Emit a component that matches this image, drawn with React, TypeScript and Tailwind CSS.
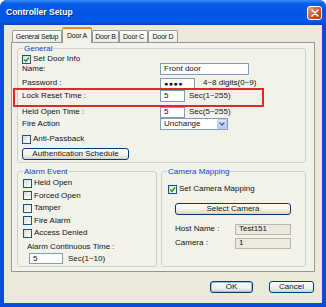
import type { ReactNode } from 'react'

const font = "font-['Liberation_Sans',Arial,sans-serif]"

export default function App() {
  return (
    <div className={`w-[326px] h-[307px] bg-[#0b4be0] flex flex-col rounded-t-[7px] overflow-hidden ${font} text-[8px] leading-none text-[#111]`}>
      <TitleBar />
      <div className="relative flex-1 mx-[4px] mb-[4px] bg-[#ece9d8] flex flex-col pt-[2px]">
        <div className="relative z-10 flex items-end h-[16px] pl-[8px]">
          <Tab label="General Setup" className="w-[50px]" />
          <Tab label="Door A" className="w-[30px]" active />
          <Tab label="Door B" className="w-[27px]" />
          <Tab label="Door C" className="w-[29px]" />
          <Tab label="Door D" className="w-[30px]" />
        </div>
        <div className="-mt-[1px] ml-[7px] w-[304px] h-[230px] border border-[#919b9c] bg-[#f3f2ea] px-[5px] pt-[5px]">
          <GeneralGroup />
          <div className="flex gap-[4px] mt-[8px]">
            <AlarmGroup />
            <CameraGroup />
          </div>
        </div>
        <div className="flex justify-end gap-[16px] pr-[8px] mt-[9px]">
          <XpButton className="w-[43px]" primary>OK</XpButton>
          <XpButton className="w-[45px]">Cancel</XpButton>
        </div>
        {/* highlight drawn over the dialog */}
        <div className="absolute left-[9px] top-[63px] w-[251px] h-[19px] border-2 border-[#e0262b]" />
      </div>
    </div>
  )
}

function TitleBar() {
  return (
    <div className="h-[25px] flex items-center pl-[6px] pr-[4px] bg-[linear-gradient(to_bottom,#3d8ff6_0%,#0a5ee9_14%,#0055e5_50%,#0559ea_85%,#0043cc_100%)]">
      <span className="text-white font-bold text-[8.5px] [text-shadow:1px_1px_0_#0a2a8a]">Controller Setup</span>
      <div className="ml-auto w-[15px] h-[14px] rounded-[3px] border border-white bg-[linear-gradient(135deg,#f0a080,#d8562e_50%,#b83510)] flex items-center justify-center">
        <svg width="8" height="8" viewBox="0 0 8 8">
          <path d="M1 1 L7 7 M7 1 L1 7" stroke="white" strokeWidth="1.6" strokeLinecap="round" />
        </svg>
      </div>
    </div>
  )
}

function Tab({ label, className, active }: { label: string; className: string; active?: boolean }) {
  if (active) {
    return (
      <div className={`${className} h-[16px] flex items-center justify-center bg-[#f3f2ea] border-x border-[#919b9c] border-t-[2px] border-t-[#e68b2c] rounded-t-[2px] text-[7px] tracking-[-0.2px] pb-[1px]`}>
        {label}
      </div>
    )
  }
  return (
    <div className={`${className} h-[12px] mb-[1px] flex items-center justify-center border border-b-0 border-[#919b9c] rounded-t-[2px] bg-[linear-gradient(to_bottom,#ffffff,#ecebe5)] text-[7px] tracking-[-0.2px]`}>
      {label}
    </div>
  )
}

function Group({ title, className, children }: { title: string; className: string; children: ReactNode }) {
  return (
    <div className={`relative border border-[#d0d0bf] rounded-[3px] ${className}`}>
      <span className="absolute -top-[4px] left-[5px] px-[1px] bg-[#f3f2ea] text-[#0046d5]">{title}</span>
      {children}
    </div>
  )
}

function Check({ checked }: { checked?: boolean }) {
  return (
    <span className="w-[9px] h-[9px] shrink-0 border border-[#1c5180] bg-[linear-gradient(135deg,#dcdcd7,#ffffff)] flex items-center justify-center">
      {checked && (
        <svg width="7" height="7" viewBox="0 0 7 7">
          <path d="M1 3.5 L2.8 5.3 L6 1.5" stroke="#21a121" strokeWidth="1.5" fill="none" />
        </svg>
      )}
    </span>
  )
}

function Field({ className, children, disabled }: { className: string; children?: ReactNode; disabled?: boolean }) {
  return (
    <div
      className={`${className} flex items-center pl-[3px] border ${
        disabled ? 'bg-[#ebeadf] border-[#b8b6a8]' : 'bg-white border-[#7f9db9]'
      }`}
    >
      {children}
    </div>
  )
}

function XpButton({ className, children, primary }: { className: string; children: ReactNode; primary?: boolean }) {
  return (
    <div
      className={`${className} h-[12px] flex items-center justify-center border border-[#003c74] rounded-[3px] bg-[linear-gradient(to_bottom,#ffffff,#f1f0ea_60%,#d8d2c6)] ${
        primary ? 'shadow-[inset_0_0_0_1px_#9fbdf0]' : ''
      }`}
    >
      {children}
    </div>
  )
}

function Row({ label, children, className = 'h-[12px]' }: { label: string; children: ReactNode; className?: string }) {
  return (
    <div className={`flex items-center ${className}`}>
      <span className="w-[138px]">{label}</span>
      {children}
    </div>
  )
}

function GeneralGroup() {
  return (
    <Group title="General" className="w-[289px] h-[115px] pt-[6px] pl-[4px]">
      <div className="flex items-center gap-[2px] h-[8px]">
        <Check checked />
        <span>Set Door Info</span>
      </div>
      <Row label="Name:">
        <Field className="w-[89px] h-[12px]">Front door</Field>
      </Row>
      <Row label="Password :" className="h-[12px] mt-[2px]">
        <Field className="w-[35px] h-[11px] text-[7px] tracking-[0.5px]">●●●●</Field>
        <span className="ml-[8px]">4~8 digits(0~9)</span>
      </Row>
      <Row label="Lock Reset Time :" className="h-[12px] mt-[1px]">
        <Field className="w-[25px] h-[12px]">5</Field>
        <span className="ml-[4px]">Sec(1~255)</span>
      </Row>
      <Row label="Held Open Time :" className="h-[12px] mt-[4px]">
        <Field className="w-[25px] h-[11px]">5</Field>
        <span className="ml-[4px]">Sec(5~255)</span>
      </Row>
      <Row label="Fire Action">
        <div className="w-[68px] h-[12px] border border-[#7f9db9] bg-white flex items-center">
          <span className="pl-[3px] flex-1">Unchange</span>
          <span className="w-[10px] h-[10px] rounded-[1px] bg-[linear-gradient(to_bottom,#dfe8fd,#b4c8f6)] border border-[#b9cbf3] flex items-center justify-center">
            <svg width="6" height="4" viewBox="0 0 6 4">
              <path d="M0.5 0.5 L3 3 L5.5 0.5" stroke="#4d6185" strokeWidth="1.3" fill="none" />
            </svg>
          </span>
        </div>
      </Row>
      <div className="flex items-center gap-[2px] h-[12px] mt-[3px]">
        <Check />
        <span>Anti-Passback</span>
      </div>
      <div className="mt-[3px]">
        <XpButton className="w-[107px]">Authentication Schedule</XpButton>
      </div>
    </Group>
  )
}

function AlarmGroup() {
  const items = ['Held Open', 'Forced Open', 'Tamper', 'Fire Alarm', 'Access Denied']
  const heights = ['h-[12px]', 'h-[13px]', 'h-[12px]', 'h-[13px]', 'h-[12px]']
  return (
    <Group title="Alarm Event" className="w-[140px] h-[96px] pt-[5px] pl-[5px]">
      {items.map((t, i) => (
        <div key={t} className={`flex items-center gap-[2px] ${heights[i]}`}>
          <Check />
          <span>{t}</span>
        </div>
      ))}
      <div className="h-[13px] flex items-center pl-[4px] mt-[1px]">Alarm Continuous Time :</div>
      <div className="flex items-center pl-[6px]">
        <Field className="w-[34px] h-[11px]">5</Field>
        <span className="ml-[5px]">Sec(1~10)</span>
      </div>
    </Group>
  )
}

function CameraGroup() {
  return (
    <Group title="Camera Mapping" className="w-[145px] h-[96px] pt-[11px] pl-[6px]">
      <div className="flex items-center gap-[2px] h-[12px]">
        <Check checked />
        <span>Set Camera Mapping</span>
      </div>
      <div className="pl-[7px] mt-[8px]">
        <XpButton className="w-[116px]">Select Camera</XpButton>
      </div>
      <div className="flex items-center pl-[7px] mt-[8px] h-[12px]">
        <span className="w-[60px]">Host Name :</span>
        <Field className="w-[56px] h-[11px]" disabled>Test151</Field>
      </div>
      <div className="flex items-center pl-[7px] mt-[2px] h-[12px]">
        <span className="w-[60px]">Camera :</span>
        <Field className="w-[56px] h-[11px]" disabled>1</Field>
      </div>
    </Group>
  )
}
